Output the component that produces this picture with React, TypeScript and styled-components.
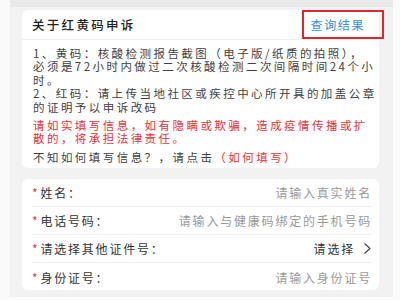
import React from "react";
import styled, { createGlobalStyle } from "styled-components";

const Global = createGlobalStyle`
  html, body { margin: 0; padding: 0; background: #fafafa; }
  body { font-family: "Noto Sans CJK SC", "Noto Sans", sans-serif; }
`;

const Frame = styled.div`
  margin-left: 10px;
  width: 383px;
  height: 297px;
  box-sizing: border-box;
  background: #f2f2f3;
  border-top: 7px solid #e9e9ea;
  padding: 3px 14px 0 12px;
  display: flex;
  flex-direction: column;
  gap: 11px;
`;

const Card = styled.div<{ $h: number }>`
  position: relative;
  background: #fff;
  border-radius: 6px;
  height: ${(p) => p.$h}px;
  box-sizing: border-box;
`;

const Header = styled.div`
  height: 29px;
  display: flex;
  align-items: center;
  justify-content: space-between;
  padding: 0 14px 0 10px;
  border-bottom: 1px solid #f0f0f0;
`;

const Title = styled.span`
  font-size: 12.5px;
  font-weight: 500;
  letter-spacing: 2.3px;
  color: #222;
`;

const Link = styled.span`
  font-size: 12px;
  letter-spacing: 1.6px;
  color: #3b8ed8;
`;

const Mark = styled.div`
  position: absolute;
  right: -5px;
  top: 0;
  width: 82px;
  height: 29px;
  box-sizing: border-box;
  border: 2px solid #e3262c;
`;

const Body = styled.div`
  padding: 7px 0 0 11px;
`;

const Para = styled.p<{ $red?: boolean; $gap?: number }>`
  margin: ${(p) => p.$gap ?? 0}px 0 0;
  font-size: 11.5px;
  line-height: 13.4px;
  letter-spacing: 2.45px;
  white-space: nowrap;
  color: ${(p) => (p.$red ? "#e5323a" : "#3f3f3f")};
`;

const Red = styled.span`
  color: #e5323a;
`;

const Row = styled.div<{ $last?: boolean }>`
  height: 28px;
  margin: 0 7px 0 10px;
  display: flex;
  align-items: center;
  justify-content: space-between;
  border-bottom: ${(p) => (p.$last ? "none" : "1px solid #f0f0f0")};
  box-sizing: border-box;
`;

const Label = styled.span`
  font-size: 12px;
  letter-spacing: 1.8px;
  color: #333;
  &::before {
    content: "*";
    color: #e5323a;
    margin-right: 1px;
  }
`;

const Value = styled.span<{ $dark?: boolean }>`
  font-size: 12px;
  letter-spacing: 1.8px;
  color: ${(p) => (p.$dark ? "#333" : "#999")};
  display: flex;
  align-items: center;
  gap: 8px;
`;

const Chevron = () => (
  <svg width="9" height="13" viewBox="0 0 9 13">
    <path d="M1.5 1.5 L7 6.5 L1.5 11.5" fill="none" stroke="#444" strokeWidth="1.2" />
  </svg>
);

export default function App() {
  return (
    <>
      <Global />
      <Frame>
        <Card $h={158}>
          <Header>
            <Title>关于红黄码申诉</Title>
            <Link>查询结果</Link>
          </Header>
          <Mark />
          <Body>
            <Para>
              1、黄码：核酸检测报告截图（电子版/纸质的拍照），
              <br />
              必须是72小时内做过二次核酸检测二次间隔时间24个小
              <br />
              时。
              <br />
              2、红码：请上传当地社区或疾控中心所开具的加盖公章
              <br />
              的证明予以申诉改码
            </Para>
            <Para $red $gap={5}>
              请如实填写信息，如有隐瞒或欺骗，造成疫情传播或扩
              <br />
              散的，将承担法律责任。
            </Para>
            <Para $gap={5}>
              不知如何填写信息？，请点击<Red>（如何填写）</Red>
            </Para>
          </Body>
        </Card>
        <Card $h={111}>
          <Row>
            <Label>姓名：</Label>
            <Value>请输入真实姓名</Value>
          </Row>
          <Row>
            <Label>电话号码：</Label>
            <Value>请输入与健康码绑定的手机号码</Value>
          </Row>
          <Row>
            <Label>请选择其他证件号：</Label>
            <Value $dark>
              请选择
              <Chevron />
            </Value>
          </Row>
          <Row $last>
            <Label>身份证号：</Label>
            <Value>请输入身份证号</Value>
          </Row>
        </Card>
      </Frame>
    </>
  );
}
